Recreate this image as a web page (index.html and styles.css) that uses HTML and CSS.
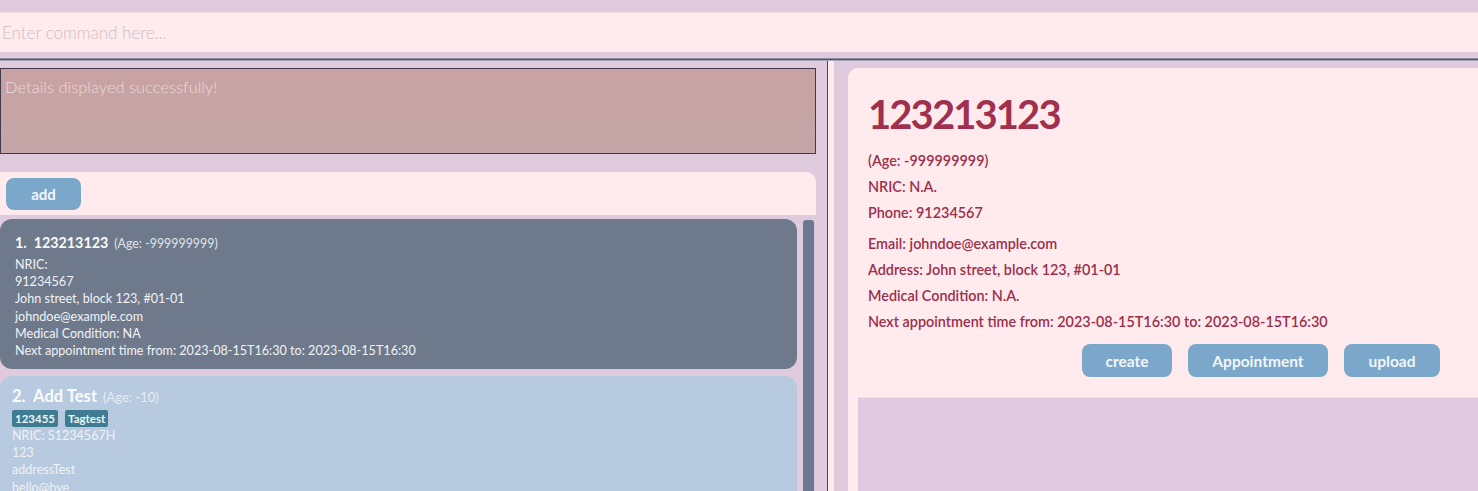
FILE: index.html
```html
<!DOCTYPE html>
<html>
<head>
<meta charset="utf-8">
<link rel="stylesheet" href="styles.css">
</head>
<body>
<div class="app">
  <div class="command-bar">
    <div class="command-box">Enter command here...</div>
  </div>
  <div class="rule"></div>
  <div class="main">
    <div class="left">
      <div class="result">Details displayed successfully!</div>
      <div class="list-head">
        <button class="btn btn-add">add</button>
      </div>
      <div class="list-area">
        <div class="cards">
          <div class="card card-dark">
            <div class="card-title"><span class="name">1.&nbsp;&nbsp;123213123</span><span class="age">(Age: -999999999)</span></div>
            <div class="line">NRIC:</div>
            <div class="line">91234567</div>
            <div class="line">John street, block 123, #01-01</div>
            <div class="line">johndoe@example.com</div>
            <div class="line">Medical Condition: NA</div>
            <div class="line">Next appointment time from: 2023-08-15T16:30 to: 2023-08-15T16:30</div>
          </div>
          <div class="card card-light">
            <div class="card-title"><span class="name">2.&nbsp;&nbsp;Add Test</span><span class="age">(Age: -10)</span></div>
            <div class="tags"><span class="tag">123455</span><span class="tag">Tagtest</span></div>
            <div class="line">NRIC: S1234567H</div>
            <div class="line">123</div>
            <div class="line">addressTest</div>
            <div class="line">hello@bye</div>
          </div>
        </div>
        <div class="scrollbar"></div>
      </div>
    </div>
    <div class="divider"></div>
    <div class="right">
      <div class="detail-card">
        <div class="detail">
          <div class="detail-title">123213123</div>
          <div class="group">
            <div class="dline">(Age: -999999999)</div>
            <div class="dline">NRIC: N.A.</div>
            <div class="dline">Phone: 91234567</div>
          </div>
          <div class="group group2">
            <div class="dline">Email: johndoe@example.com</div>
            <div class="dline">Address: John street, block 123, #01-01</div>
            <div class="dline">Medical Condition: N.A.</div>
            <div class="dline">Next appointment time from: 2023-08-15T16:30 to: 2023-08-15T16:30</div>
          </div>
          <div class="actions">
            <button class="btn btn-create">create</button>
            <button class="btn btn-appt">Appointment</button>
            <button class="btn btn-upload">upload</button>
          </div>
        </div>
        <div class="extra"></div>
      </div>
    </div>
  </div>
</div>
</body>
</html>
```
FILE: styles.css
```css
* { box-sizing: border-box; }
html, body { margin: 0; padding: 0; }
body {
  width: 1478px;
  height: 491px;
  overflow: hidden;
  background: #dfcbdd;
  font-family: Lato, "Open Sans", sans-serif;
}
.app { display: flex; flex-direction: column; height: 491px; }
.command-bar { padding-top: 12px; }
.command-box {
  height: 40px;
  background: #ffebee;
  color: #cbbec0;
  font-size: 17px;
  font-weight: 300;
  padding: 0 2px;
  display: flex;
  align-items: center;
  border-top: 1px solid #f0dfe3;
}
.rule {
  margin-top: 6px;
  height: 3px;
  background: #53586a;
  border-top: 1px solid #8d8ea0;
  border-bottom: 1px solid #a9a3b6;
}
.main { flex: 1; display: flex; min-height: 0; }
.left {
  width: 827px;
  padding: 7px 11px 0 0;
  display: flex;
  flex-direction: column;
}
.result {
  height: 86px;
  background: linear-gradient(180deg, #c9a2a2, #c4a6a7);
  border: 1px solid #3e3a52;
  color: #ecd9da;
  font-size: 16.5px;
  font-weight: 300;
  padding: 8px 4px;
}
.list-head {
  margin-top: 18px;
  height: 43px;
  background: #ffebee;
  border-radius: 0 10px 0 0;
  padding: 6px 6px;
}
.btn {
  border: none;
  background: #7ba7ca;
  color: #f2f6fb;
  font-family: inherit;
  font-weight: 700;
  font-size: 15.5px;
  border-radius: 8px;
  height: 33px;
  padding: 0;
}
.btn-add { width: 75px; height: 32px; font-size: 15px; }
.list-area {
  flex: 1;
  display: flex;
  gap: 6px;
  padding-top: 4px;
  min-height: 0;
}
.cards { width: 797px; display: flex; flex-direction: column; gap: 7px; }
.card {
  border-radius: 12px;
  padding: 15px 15px 10px;
  color: #f1f2f5;
  font-size: 12.6px;
}
.card-dark { background: #6e7a8b; height: 150px; }
.card-light { background: #b8cadf; flex: 1; padding-top: 10px; padding-left: 12px; color: #eef2f7; }
.card-title { display: flex; align-items: baseline; gap: 6px; height: 22px; }
.name { font-size: 14.3px; font-weight: 700; color: #fafbfc; }
.card-light .name { font-size: 16.6px; }
.age { font-size: 12.4px; color: #dfe3ea; }
.card-light .age { color: #e6ecf3; font-size: 13px; }
.line { line-height: 17.2px; }
.tags { display: flex; gap: 7px; margin: 2px 0 0; }
.tag {
  background: #3f7c92;
  color: #eef5f8;
  font-size: 11.5px;
  font-weight: 700;
  height: 17px;
  line-height: 17px;
  padding: 0 3px;
  border-radius: 2px;
}
.scrollbar {
  width: 11px;
  background: #6a7890;
  border-radius: 3px 3px 0 0;
  margin-top: 1px;
}
.divider {
  width: 7px;
  background: #ffebee;
  border-left: 1px solid #4a4452;
}
.right { flex: 1; padding: 7px 0 0 14px; min-width: 0; }
.detail-card {
  height: 100%;
  background: #ffebee;
  border-radius: 10px 0 0 0;
  padding-left: 10px;
  display: flex;
  flex-direction: column;
}
.detail { padding: 22px 0 0 10px; color: #9c2f4a; }
.detail-title { font-size: 40px; font-weight: 700; line-height: 48px; letter-spacing: -1.9px; color: #a0304d; }
.group { margin-top: 10px; }
.group2 { margin-top: 5px; }
.dline { font-size: 14.4px; font-weight: 600; line-height: 26px; }
.actions {
  display: flex;
  gap: 16px;
  margin: 9px 0 0 214px;
}
.btn-create { width: 90px; }
.btn-appt { width: 140px; }
.btn-upload { width: 96px; }
.extra { flex: 1; margin-top: 20px; background: #e0cadf; border-top: 1px solid #eddde7; }
```
